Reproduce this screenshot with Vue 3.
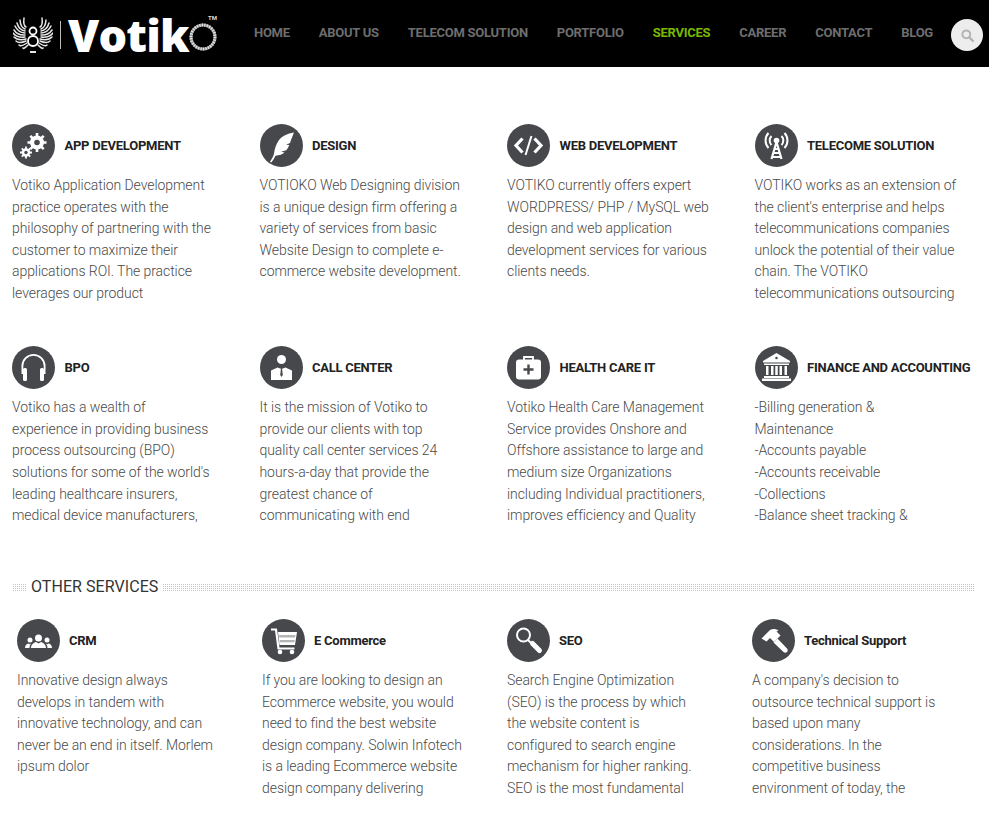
<script setup>
const nav = ['Home', 'About Us', 'Telecom Solution', 'Portfolio', 'Services', 'Career', 'Contact', 'Blog']

const tipsLeft = [
  [24, 18, 26, 27], [20, 20, 25, 29], [17, 23, 25, 31], [15, 26, 25, 33], [14, 30, 25, 35],
  [13, 33, 25, 37], [14, 37, 26, 39], [16, 41, 26, 41], [19, 45, 27, 43], [23, 48, 28, 45]
]
const feathers = tipsLeft.flatMap(([x, y, bx, by]) => {
  const cx = (x + bx) / 2 - 2
  const cy = (y + by) / 2 + 3
  const mirror = (v) => 66 - v
  return [
    `M${bx} ${by}Q${cx} ${cy} ${x} ${y}`,
    `M${mirror(bx)} ${by}Q${mirror(cx)} ${cy} ${mirror(x)} ${y}`
  ]
})

const icons = {
  gears: `<g fill="#fff"><circle cx="25" cy="18.5" r="7"/><g stroke="#fff" stroke-width="2.6"><path d="M25 9v19M15.500 18.500h19M18.300 11.800l13.400 13.400M31.700 11.800 18.300 25.200"/></g><circle cx="25" cy="18.500" r="2.800" fill="#46484b"/><circle cx="14" cy="28.500" r="4.200"/><g stroke="#fff" stroke-width="1.800"><path d="M14 22.500v12M8 28.500h12M9.800 24.300l8.400 8.400M18.200 24.300l-8.400 8.400"/></g><circle cx="14" cy="28.500" r="1.700" fill="#46484b"/></g>`,
  feather: `<path fill="#fff" d="M34 8.500c-7 1-12 3.500-15 7.500-3 4-4.300 9-5 13.500-.5 2.500-2 5.500-4 8l1.300 1c1.900-2.300 3.300-4.600 4.200-6.700 4-.5 7-1.500 9-3.300l-3.400-.7 5.200-1.600c1.300-1.400 2.300-3.100 3-5.200l-3.300-.2 4-1.800c1.200-3.300 2.500-6.900 4-10.500z"/>`,
  code: `<g fill="none" stroke="#fff" stroke-width="3.200"><path d="M15.500 14.500 9 21.500l6.500 7M27.500 14.500l6.500 7-6.500 7"/><path stroke-width="2" d="M24.500 12 18.500 31"/></g>`,
  tower: `<g fill="none" stroke="#fff"><path stroke-width="2" d="M16.500 21a6.500 6.500 0 0 1 0-9M26.500 21a6.500 6.500 0 0 0 0-9M13.500 24a11 11 0 0 1 0-15M29.500 24a11 11 0 0 0 0-15"/><path stroke-width="2.200" d="M21.500 18 16.500 35M21.500 18 26.500 35M18 29h7M17 33h9M19 25h5"/></g><circle cx="21.500" cy="16.500" r="2.800" fill="#fff"/>`,
  phones: `<g fill="#fff"><path d="M9.500 28v-8a12 12 0 0 1 24 0v8h-1.800v-8a10.200 10.200 0 0 0-20.400 0v8z"/><rect x="11" y="22" width="4" height="13" rx="1.500"/><rect x="28" y="22" width="4" height="13" rx="1.500"/></g>`,
  agent: `<g fill="#fff"><circle cx="21.500" cy="13.500" r="4.500"/><path d="M11 24.500 17.500 21.500l4 1.500 4-1.500 6.500 3V34H11z"/></g><path fill="#46484b" d="M20.900 23h1.200l.7 6-1.300 2-1.300-2z"/>`,
  kit: `<path fill="none" stroke="#fff" stroke-width="1.800" d="M17 14v-3h9v3"/><rect x="9" y="13.500" width="25" height="20" rx="3" fill="#fff"/><path stroke="#46484b" stroke-width="2.400" d="M21.500 18.500v10M16.500 23.500h10"/>`,
  bank: `<g fill="#fff"><path d="M21.500 7 35 15v1.500H8V15z"/><rect x="9" y="17.500" width="25" height="1.500"/><rect x="11" y="20" width="2.500" height="9"/><rect x="16" y="20" width="2.500" height="9"/><rect x="24.500" y="20" width="2.500" height="9"/><rect x="29.500" y="20" width="2.500" height="9"/><rect x="20.250" y="20" width="2.500" height="9"/><rect x="9" y="30" width="25" height="2"/><rect x="7" y="32.500" width="29" height="2.500"/></g><circle cx="21.500" cy="12" r="1.300" fill="#46484b"/>`,
  people: `<g fill="#fff"><circle cx="21.500" cy="19" r="3.500"/><path d="M14 29c0-3.500 2.800-5.500 5-6l2.500 1.500L24 23c2.200.5 5 2.500 5 6z"/><circle cx="13" cy="21" r="2.500"/><path d="M8 29c0-2.500 1.500-4 3.300-4.500l1.500.8 1.400-.7c-1 1.200-1.700 2.700-1.700 4.400z"/><circle cx="30" cy="21" r="2.500"/><path d="M35 29c0-2.500-1.500-4-3.300-4.500l-1.500.8-1.400-.7c1 1.200 1.700 2.700 1.700 4.400z"/></g>`,
  cart: `<path fill="none" stroke="#fff" stroke-width="2.200" d="M9 10.500h5l2.500 19h16"/><path fill="#fff" d="M16 13h19l-2 13H17.500z"/><path fill="#b5b5b5" d="M17 16h16.500l-.5 2.500H17.300zM17.600 21h15.200l-.4 2.300H17.900z"/><circle cx="18" cy="33" r="2.300" fill="#fff"/><circle cx="30" cy="33" r="2.300" fill="#fff"/>`,
  search: `<circle cx="16.500" cy="16" r="6.500" fill="none" stroke="#fff" stroke-width="2"/><path stroke="#fff" stroke-width="5" stroke-linecap="round" d="M25.500 24.500l7 7"/><path stroke="#fff" stroke-width="2" d="M21 21l4 4"/>`,
  hammer: `<g fill="#fff"><path d="M9.500 19.500 18 11c3-1.500 6-1 8.500.5l-2 1 4 4-6.500 6.500-4-4-3.500 3.500z"/><path d="m21.500 23.500 4-4 9.500 10c1 1.200 1 2.500 0 3.500s-2.500 1-3.500 0z"/></g>`
}

const rowA = [
  { icon: 'gears', title: 'APP DEVELOPMENT', lines: ['Votiko Application Development', 'practice operates with the', 'philosophy of partnering with the', 'customer to maximize their', 'applications ROI. The practice', 'leverages our product'] },
  { icon: 'feather', title: 'DESIGN', lines: ['VOTIOKO Web Designing division', 'is a unique design firm offering a', 'variety of services from basic', 'Website Design to complete e-', 'commerce website development.'] },
  { icon: 'code', title: 'WEB DEVELOPMENT', lines: ['VOTIKO currently offers expert', 'WORDPRESS/ PHP / MySQL web', 'design and web application', 'development services for various', 'clients needs.'] },
  { icon: 'tower', title: 'TELECOME SOLUTION', lines: ['VOTIKO works as an extension of', 'the client\'s enterprise and helps', 'telecommunications companies', 'unlock the potential of their value', 'chain. The VOTIKO', 'telecommunications outsourcing'] },
  { icon: 'phones', title: 'BPO', lines: ['Votiko has a wealth of', 'experience in providing business', 'process outsourcing (BPO)', 'solutions for some of the world\'s', 'leading healthcare insurers,', 'medical device manufacturers,'] },
  { icon: 'agent', title: 'CALL CENTER', lines: ['It is the mission of Votiko to', 'provide our clients with top', 'quality call center services 24', 'hours-a-day that provide the', 'greatest chance of', 'communicating with end'] },
  { icon: 'kit', title: 'HEALTH CARE IT', lines: ['Votiko Health Care Management', 'Service provides Onshore and', 'Offshore assistance to large and', 'medium size Organizations', 'including Individual practitioners,', 'improves efficiency and Quality'] },
  { icon: 'bank', title: 'FINANCE AND ACCOUNTING', lines: ['-Billing generation &', 'Maintenance', '-Accounts payable', '-Accounts receivable', '-Collections', '-Balance sheet tracking &'] }
]

const rowB = [
  { icon: 'people', title: 'CRM', lines: ['Innovative design always', 'develops in tandem with', 'innovative technology, and can', 'never be an end in itself. Morlem', 'ipsum dolor'] },
  { icon: 'cart', title: 'E Commerce', lines: ['If you are looking to design an', 'Ecommerce website, you would', 'need to find the best website', 'design company. Solwin Infotech', 'is a leading Ecommerce website', 'design company delivering'] },
  { icon: 'search', title: 'SEO', lines: ['Search Engine Optimization', '(SEO) is the process by which', 'the website content is', 'configured to search engine', 'mechanism for higher ranking.', 'SEO is the most fundamental'] },
  { icon: 'hammer', title: 'Technical Support', lines: ['A company\'s decision to', 'outsource technical support is', 'based upon many', 'considerations. In the', 'competitive business', 'environment of today, the'] }
]
</script>

<template>
  <div class="page">
    <header class="topbar">
      <div class="logo">
        <svg class="wings" width="40" height="37" viewBox="13 17 40 37">
          <g fill="none" stroke="#e8e8e8" stroke-width="1.500" stroke-linecap="round">
            <path v-for="d in feathers" :key="d" :d="d" />
          </g>
          <g fill="none" stroke="#fff" stroke-width="1.800">
            <circle cx="33" cy="31" r="3.500" />
            <circle cx="33" cy="41" r="5" />
            <path d="M30 52h6" />
          </g>
        </svg>
        <span class="logo-bar"></span>
        <span class="logo-word">Votik</span>
        <svg class="ring" width="28" height="28" viewBox="0 0 28 28">
          <circle cx="14" cy="14" r="12" fill="none" stroke="#8f8f8f" stroke-width="3" />
          <circle cx="14" cy="14" r="12" fill="none" stroke="#e6e6e6" stroke-width="3" stroke-dasharray="1.200 1.300" />
        </svg>
        <span class="tm">TM</span>
      </div>
      <nav class="nav">
        <a v-for="item in nav" :key="item" :class="{ active: item === 'Services' }">{{ item }}</a>
      </nav>
      <div class="search">
        <svg width="13" height="13" viewBox="0 0 13 13">
          <circle cx="5.300" cy="5.300" r="3.900" fill="none" stroke="#b4b4b4" stroke-width="2" />
          <path d="M8.300 8.300 12 12" stroke="#b4b4b4" stroke-width="2.400" stroke-linecap="round" />
        </svg>
      </div>
    </header>

    <main class="content">
      <section class="grid main-grid">
        <article v-for="s in rowA" :key="s.title" class="card">
          <div class="card-head">
            <svg class="badge" viewBox="0 0 43 43" width="43" height="43">
              <circle cx="21.500" cy="21.500" r="21.500" fill="#46484b" />
              <g v-html="icons[s.icon]"></g>
            </svg>
            <h3>{{ s.title }}</h3>
          </div>
          <p><span v-for="l in s.lines" :key="l" class="line">{{ l }}</span></p>
        </article>
      </section>

      <div class="rule-title"><span>OTHER SERVICES</span></div>

      <section class="grid other-grid">
        <article v-for="s in rowB" :key="s.title" class="card">
          <div class="card-head">
            <svg class="badge" viewBox="0 0 43 43" width="43" height="43">
              <circle cx="21.500" cy="21.500" r="21.500" fill="#46484b" />
              <g v-html="icons[s.icon]"></g>
            </svg>
            <h3>{{ s.title }}</h3>
          </div>
          <p><span v-for="l in s.lines" :key="l" class="line">{{ l }}</span></p>
        </article>
      </section>
    </main>
  </div>
</template>

<style>
html, body { background: #fff; }
</style>

<style scoped>
.page {
  width: 989px;
  height: 830px;
  overflow: hidden;
  background: #fff;
  font-family: Roboto, "Liberation Sans", sans-serif;
}
.topbar {
  height: 67px;
  background: #000;
  display: flex;
  align-items: center;
  box-sizing: border-box;
  padding: 0 6px 0 13px;
}
.logo {
  position: relative;
  width: 241px;
  height: 67px;
  display: flex;
  align-items: center;
  flex: none;
}
.wings { flex: none; margin-top: 3px; }
.logo-bar {
  width: 1px;
  height: 28px;
  background: #bbb;
  margin: 3px 7px 0 7px;
  flex: none;
}
.logo-word {
  font-family: "Open Sans", sans-serif;
  font-weight: 800;
  font-size: 45px;
  line-height: 67px;
  letter-spacing: -0.8px;
  color: #fff;
  margin-top: 2px;
}
.ring {
  margin: 7px 0 0 0;
  flex: none;
}
.tm {
  position: absolute;
  left: 195px;
  top: 14px;
  font-size: 6px;
  font-weight: 700;
  color: #ddd;
}
.nav {
  display: flex;
  gap: 29px;
  flex: 1;
  margin-top: -3px;
}
.nav a {
  font-size: 13px;
  font-weight: 700;
  text-transform: uppercase;
  letter-spacing: -0.26px;
  color: #6e6e6e;
  white-space: nowrap;
}
.nav a.active { color: #7ab800; }
.search {
  width: 32px;
  height: 32px;
  border-radius: 50%;
  background: #ededed;
  display: flex;
  align-items: center;
  justify-content: center;
  flex: none;
  margin-top: 3px;
}
.content { padding-top: 57px; }
.grid { display: grid; grid-template-columns: repeat(4, 1fr); }
.main-grid { row-gap: 41.6px; width: 990px; }
.other-grid { margin: 0 4px 0 5px; width: 980px; padding-top: 22px; }
.other-grid .card-head { gap: 9px; }
.card { padding: 0 12px; min-width: 0; }
.card-head {
  display: flex;
  align-items: center;
  gap: 9.5px;
  height: 43px;
  margin-bottom: 8px;
}
.badge { flex: none; }
.card h3 {
  margin: 0;
  font-size: 13px;
  font-weight: 700;
  letter-spacing: -0.25px;
  line-height: 16px;
  color: #222;
  white-space: nowrap;
}
.card p {
  margin: 0;
  height: 129.6px;
  font-size: 14px;
  font-weight: 300;
  letter-spacing: -0.07px;
  line-height: 21.600px;
  color: #4a4a4a;
}
.line { display: block; white-space: nowrap; }
.rule-title {
  margin: 50.3px 15px 0 12px;
  height: 20px;
  display: flex;
  align-items: center;
  background-image:
    repeating-linear-gradient(to right, #fff 0 1px, transparent 1px 2px),
    repeating-linear-gradient(to bottom, #c4c4c4 0 1px, transparent 1px 2px);
  background-size: 100% 7px;
  background-position: 0 7px;
  background-repeat: no-repeat;
}
.rule-title span {
  margin-left: 15px;
  padding: 0 4px;
  background: #fff;
  font-size: 16px;
  font-weight: 400;
  letter-spacing: 0.06px;
  color: #333;
  line-height: 20px;
}
</style>
